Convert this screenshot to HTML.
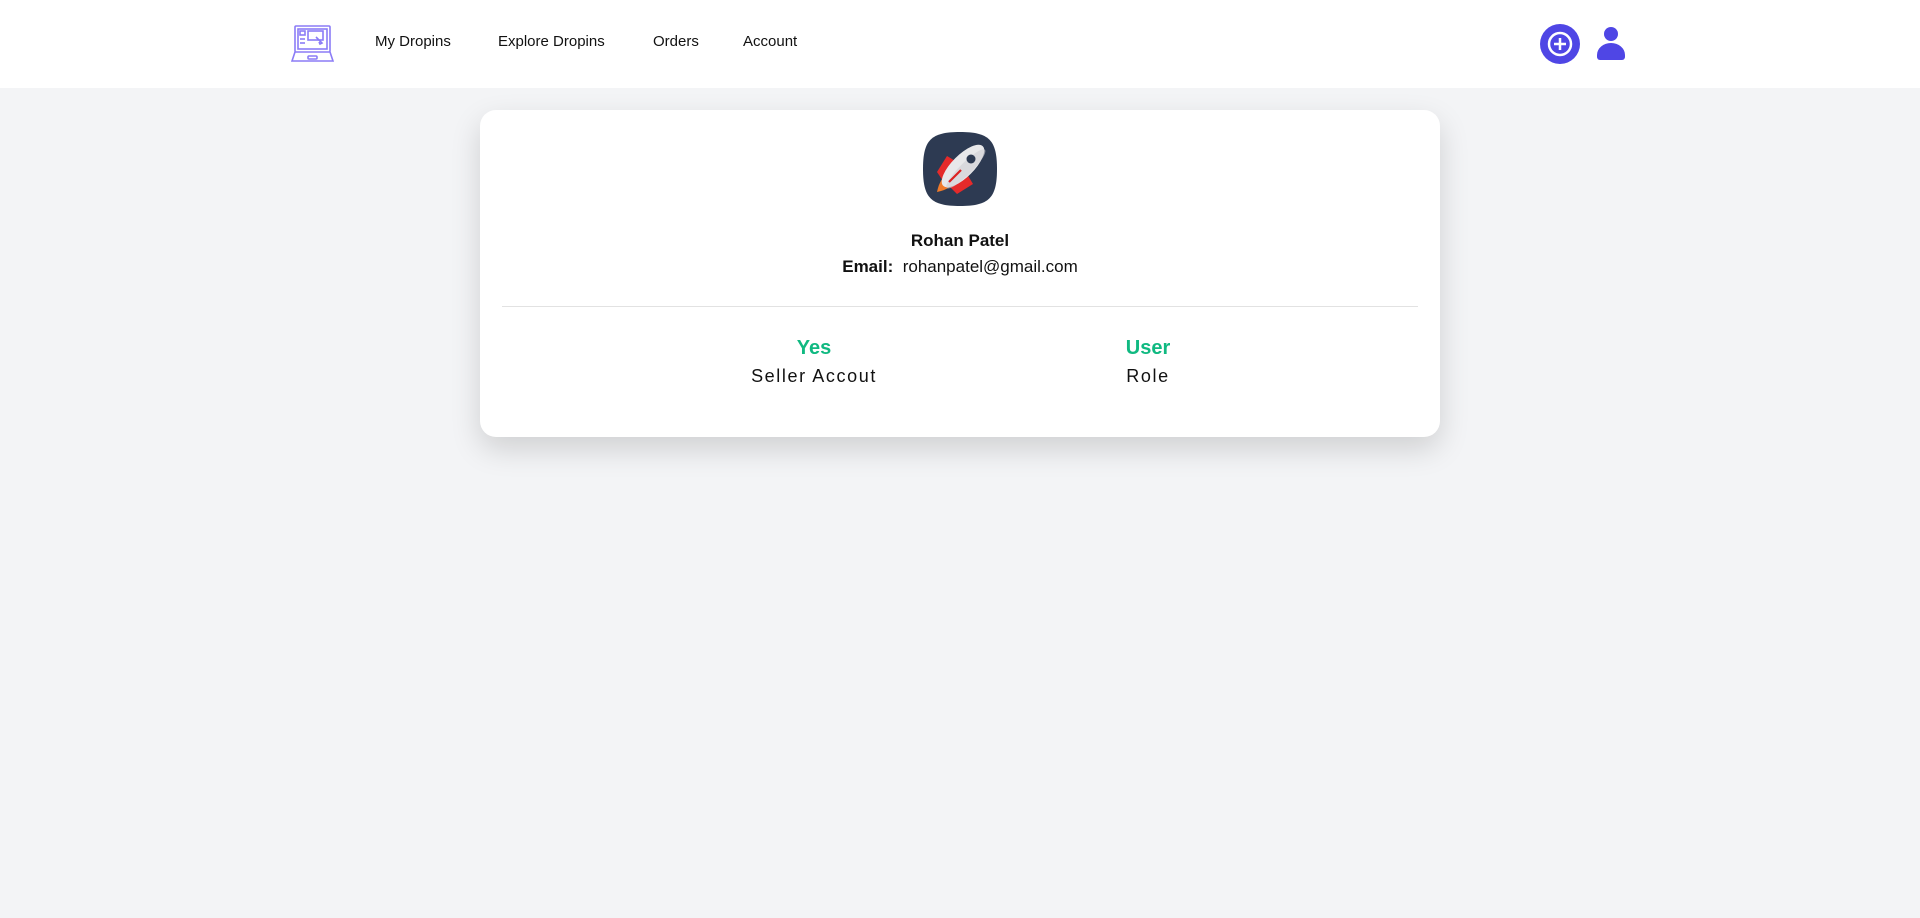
<!DOCTYPE html>
<html><head><meta charset="utf-8"><style>
*{margin:0;padding:0;box-sizing:border-box}
body{width:1920px;height:918px;background:#f3f4f6;font-family:"Liberation Sans",sans-serif;color:#111;overflow:hidden;position:relative}
.hdr{position:absolute;left:0;top:0;width:1920px;height:88px;background:#fff}
.nav{position:absolute;top:33px;font-size:15px;color:#111}
.card{position:absolute;left:480px;top:110px;width:960px;height:327px;background:#fff;border-radius:16px;box-shadow:0 12px 30px rgba(0,0,0,0.15)}
.c{position:absolute;text-align:center;transform:translateX(-50%);white-space:nowrap}
</style></head><body>
<div class="hdr">
<svg style="position:absolute;left:291px;top:25px" width="43" height="37" viewBox="0 0 43 37" fill="none" stroke="#8b7cf6" stroke-width="1.6">
<rect x="4" y="1" width="35" height="26" rx="1"/>
<rect x="7" y="4" width="29" height="20"/>
<rect x="9" y="6" width="5" height="4"/>
<line x1="9" y1="14" x2="14" y2="14"/><line x1="9" y1="18" x2="14" y2="18"/>
<rect x="17" y="6" width="15" height="9"/>
<path d="M25 12 l6 6 l-2 1 l-1 -2"/>
<path d="M4 27 L1 36 H42 L39 27"/>
<rect x="17" y="31" width="9" height="3" rx="1"/>
</svg>
<div class="nav" style="left:375px">My Dropins</div>
<div class="nav" style="left:498px">Explore Dropins</div>
<div class="nav" style="left:653px">Orders</div>
<div class="nav" style="left:743px">Account</div>
<svg style="position:absolute;left:1540px;top:24px" width="40" height="40" viewBox="0 0 40 40">
<circle cx="20" cy="20" r="20" fill="#4f46e5"/>
<circle cx="20" cy="20" r="11" fill="none" stroke="#fff" stroke-width="2.5"/>
<path d="M20 14v12M14 20h12" stroke="#fff" stroke-width="2.5"/>
</svg>
<svg style="position:absolute;left:1597px;top:27px" width="28" height="33" viewBox="0 0 28 33" fill="#4f46e5">
<circle cx="14" cy="7" r="7"/>
<path d="M0 28 a14 12 0 0 1 28 0 v2 a3 3 0 0 1 -3 3 h-22 a3 3 0 0 1 -3 -3z"/>
</svg>
</div>
<div class="card">
<svg style="position:absolute;left:443px;top:22px" width="74" height="76" viewBox="0 0 74 76">
<path d="M37 0 C66 0 74 8 74 37 C74 66 66 74 37 74 C8 74 0 66 0 37 C0 8 8 0 37 0z" fill="#2d3a52"/>
<path d="M14 40 L24 24 L34 30 L22 52z" fill="#e52a2a"/>
<path d="M34 62 L50 52 L44 42 L24 52z" fill="#e52a2a"/>
<path d="M14 60 C16 50 20 44 26 42 L32 48 C30 54 24 58 14 60z" fill="#f07a2a"/>
<g transform="rotate(-45 40 34)">
<ellipse cx="40" cy="34" rx="28" ry="11" fill="#e8e8ea"/>
<ellipse cx="40" cy="38" rx="27" ry="6" fill="#cfcfd4" opacity=".6"/>
</g>
<circle cx="48" cy="27" r="4.5" fill="#2d3a52"/>
<path d="M26 50 L38 38" stroke="#d22" stroke-width="2.2"/>
</svg>
<div class="c" style="left:480px;top:121px;font-size:17px;font-weight:bold">Rohan Patel</div>
<div class="c" style="left:480px;top:147px;font-size:17px"><b>Email:</b>&nbsp; rohanpatel@gmail.com</div>
<div style="position:absolute;left:22px;top:196px;width:916px;height:1px;background:#e2e2e2"></div>
<div class="c" style="left:334px;top:227px;font-size:20px;font-weight:bold;color:#10b981">Yes</div>
<div class="c" style="left:334px;top:256px;font-size:18px;letter-spacing:1.6px">Seller Accout</div>
<div class="c" style="left:668px;top:227px;font-size:20px;font-weight:bold;color:#10b981">User</div>
<div class="c" style="left:668px;top:256px;font-size:18px;letter-spacing:1.6px">Role</div>
</div>
</body></html>
